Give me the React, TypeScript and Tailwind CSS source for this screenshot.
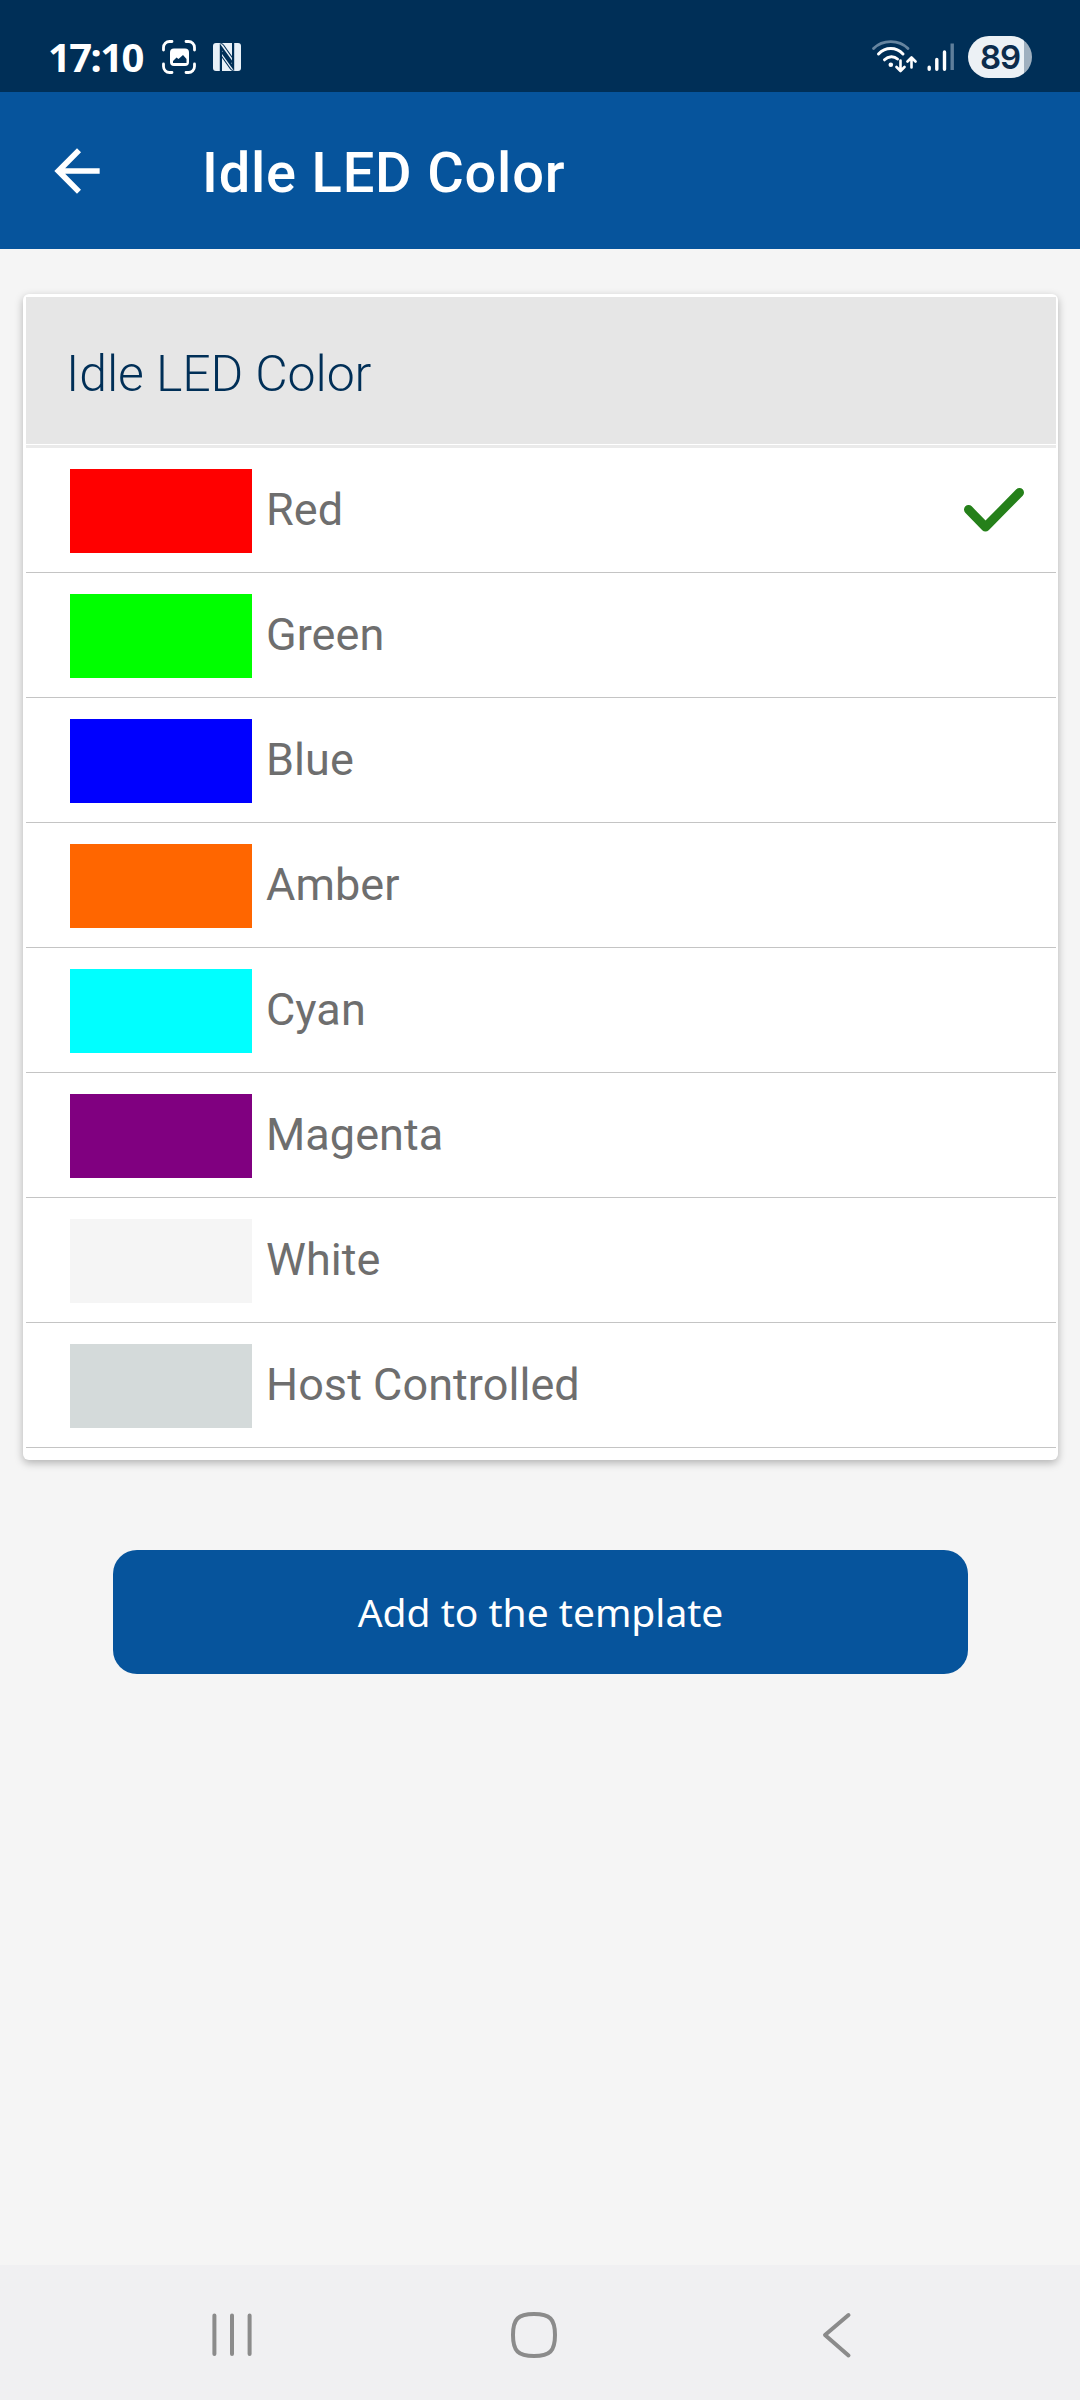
type Option = { label: string; swatch: string; selected?: boolean };

const options: Option[] = [
  { label: "Red", swatch: "bg-[#ff0000]", selected: true },
  { label: "Green", swatch: "bg-[#00ff00]" },
  { label: "Blue", swatch: "bg-[#0000ff]" },
  { label: "Amber", swatch: "bg-[#ff6600]" },
  { label: "Cyan", swatch: "bg-[#00ffff]" },
  { label: "Magenta", swatch: "bg-[#800080]" },
  { label: "White", swatch: "bg-[#f5f5f5]" },
  { label: "Host Controlled", swatch: "bg-[#d4dada]" },
];

function CaptureIcon() {
  return (
    <svg className="h-9 w-9" viewBox="0 0 36 36" fill="none">
      <path
        d="M2.5 11V8.500a6 6 0 0 1 6-6H11M25 2.500h2.500a6 6 0 0 1 6 6V11M33.500 25v2.500a6 6 0 0 1-6 6H25M11 33.500H8.500a6 6 0 0 1-6-6V25"
        stroke="#fff"
        strokeWidth="2.800"
        strokeLinecap="round"
      />
      <rect x="9" y="9.500" width="19" height="17.500" rx="4" fill="#fff" />
      <path d="M12 24v-2l3.500-3.500 2 1.500 4.500-4 3.500 4V24z" fill="#002f57" />
    </svg>
  );
}

function NfcIcon() {
  return (
    <svg className="ml-[15px] h-[30px] w-[30px]" viewBox="0 0 30 30" fill="none">
      <path d="M4 1h22q3 0 3 3v22q0 3-3 3H4q-3 0-3-3V4q0-3 3-3z" fill="#e9f1f8" />
      <path d="M8.900 29V5L20 20.500M21.100 1v24.500L10 10" stroke="#002f57" strokeWidth="2.200" />
      <path d="M8.500 1.500q2 0 3 1.500l9.500 13.500M21.500 28.500q-2 0-3-1.500L9 13.500" stroke="#002f57" strokeWidth="1.100" />
    </svg>
  );
}

function WifiIcon() {
  return (
    <svg className="h-9 w-[46px]" viewBox="0 0 46 36" fill="none" strokeLinecap="round">
      <path d="M2.500 9.500c9-9.300 25.500-9.300 34.500 0" stroke="#6685a0" strokeWidth="2.800" />
      <path d="M7.500 15c7-7.300 17.500-7.300 24.500 0" stroke="#fff" strokeWidth="3" />
      <path d="M13.500 20.800c4-4 9.500-4 13 -.8" stroke="#fff" strokeWidth="3" />
      <circle cx="19.800" cy="25.800" r="2.300" fill="#fff" />
      <path
        d="M29.500 21.500v10M25.500 28l4 4 4-4M40.500 28.500v-9M36.500 22.500l4-4 4 4"
        stroke="#fff"
        strokeWidth="2.600"
        strokeLinejoin="round"
      />
    </svg>
  );
}

function SignalIcon() {
  return (
    <svg className="ml-[8px] h-[30px] w-[30px]" viewBox="0 0 30 30" fill="none" strokeLinecap="round" strokeWidth="3.400">
      <path d="M4.200 25.200v2M11.800 17.500v9.700M19.500 10v17.200" stroke="#fff" />
      <path d="M27.200 1.500v26.500" stroke="#5f7f9b" strokeLinecap="butt" />
    </svg>
  );
}

function StatusBar() {
  return (
    <header className="flex h-[92px] items-center bg-[#002f57] pr-[48px] pl-[48px] pt-[22px]">
      <span className="w-[113px] font-['Noto_Sans'] text-[40px] leading-[40px] font-bold tracking-[-1.600px] text-white">
        17:10
      </span>
      <CaptureIcon />
      <NfcIcon />
      <div className="ml-auto flex items-center">
        <WifiIcon />
        <SignalIcon />
        <div className="ml-[13px] flex h-[42px] w-[64px] items-center justify-center rounded-full bg-[linear-gradient(90deg,#ecf1f5_0_56px,#9fb0bf_56px)] font-['Inter'] text-[33px] leading-none font-semibold tracking-[-1.200px] text-[#0b2c4c]">
          89
        </div>
      </div>
    </header>
  );
}

function AppBar() {
  return (
    <div className="flex h-[157px] items-center bg-[#06549c] pl-[43px]">
      <svg className="h-[68px] w-[68px]" viewBox="0 0 24 24" fill="#fff">
        <path d="M20 11H7.830l5.590-5.590L12 4l-8 8 8 8 1.410-1.410L7.830 13H20v-2z" />
      </svg>
      <h1 className="mt-[5px] ml-[91px] text-[56px] leading-none font-medium tracking-[0.8px] text-white">
        Idle LED Color
      </h1>
    </div>
  );
}

function CheckIcon() {
  return (
    <svg className="mr-[30px] ml-auto h-12 w-16" viewBox="0 0 64 48" fill="none">
      <path d="M6.500 23.500L23.500 41 57.500 6.500" stroke="#25801a" strokeWidth="9" strokeLinecap="round" strokeLinejoin="round" />
    </svg>
  );
}

function OptionRow({ label, swatch, selected }: Option) {
  return (
    <li className="flex h-[125px] items-center border-b border-[#c4c4c4] pl-11">
      <span className={`mt-px h-[84px] w-[182px] ${swatch}`} />
      <span className="mb-[2px] ml-[14px] text-[45px] leading-none tracking-[0.05px] text-[#6e6e6e]">{label}</span>
      {selected && <CheckIcon />}
    </li>
  );
}

function NavBar() {
  return (
    <nav className="mt-auto flex h-[135px] items-center bg-[#f0f0f2] pt-[4px] pl-[208px]">
      <svg className="h-12 w-12" viewBox="0 0 48 48" fill="none" stroke="#8b8b8b" strokeWidth="4" strokeLinecap="round">
        <path d="M6.400 4.500v38.500M24 4.500v38.500M41.600 4.500v38.500" />
      </svg>
      <svg className="ml-[254px] h-12 w-12" viewBox="0 0 48 48" fill="none" stroke="#8b8b8b" strokeWidth="4">
        <path d="M24 3c16 0 21 5 21 21s-5 21-21 21S3 40 3 24 8 3 24 3z" />
      </svg>
      <svg className="ml-[262px] h-12 w-8" viewBox="0 0 32 48" fill="none" stroke="#8b8b8b" strokeWidth="4" strokeLinecap="round" strokeLinejoin="round">
        <path d="M28.500 4L5 24l23.500 20.500" />
      </svg>
    </nav>
  );
}

export default function App() {
  return (
    <div className="flex h-[2400px] w-[1080px] flex-col bg-[#f5f5f5] font-['Roboto',sans-serif]">
      <StatusBar />
      <AppBar />
      <main>
        <section className="mt-[45px] mr-[22px] ml-[23px] h-[1166px] rounded-[6px] bg-white pt-[3px] pr-[2px] pl-[3px] shadow-[0_3px_8px_rgba(0,0,0,0.28)]">
          <div className="flex h-[147px] items-center bg-[#e6e6e6] pt-[6px] pl-[40px]">
            <h2 className="text-[50px] leading-none font-light tracking-[-0.1px] text-[#002f57]">Idle LED Color</h2>
          </div>
          <div className="mt-px h-[3px] bg-[#eaeaea]" />
          <ul>
            {options.map((option) => (
              <OptionRow key={option.label} {...option} />
            ))}
          </ul>
        </section>
        <button className="mt-[90px] ml-[113px] flex h-[124px] w-[855px] items-center justify-center rounded-[24px] bg-[#06549c] pb-[2px] font-['Noto_Sans'] text-[39px] leading-none text-white">
          Add to the template
        </button>
      </main>
      <NavBar />
    </div>
  );
}
